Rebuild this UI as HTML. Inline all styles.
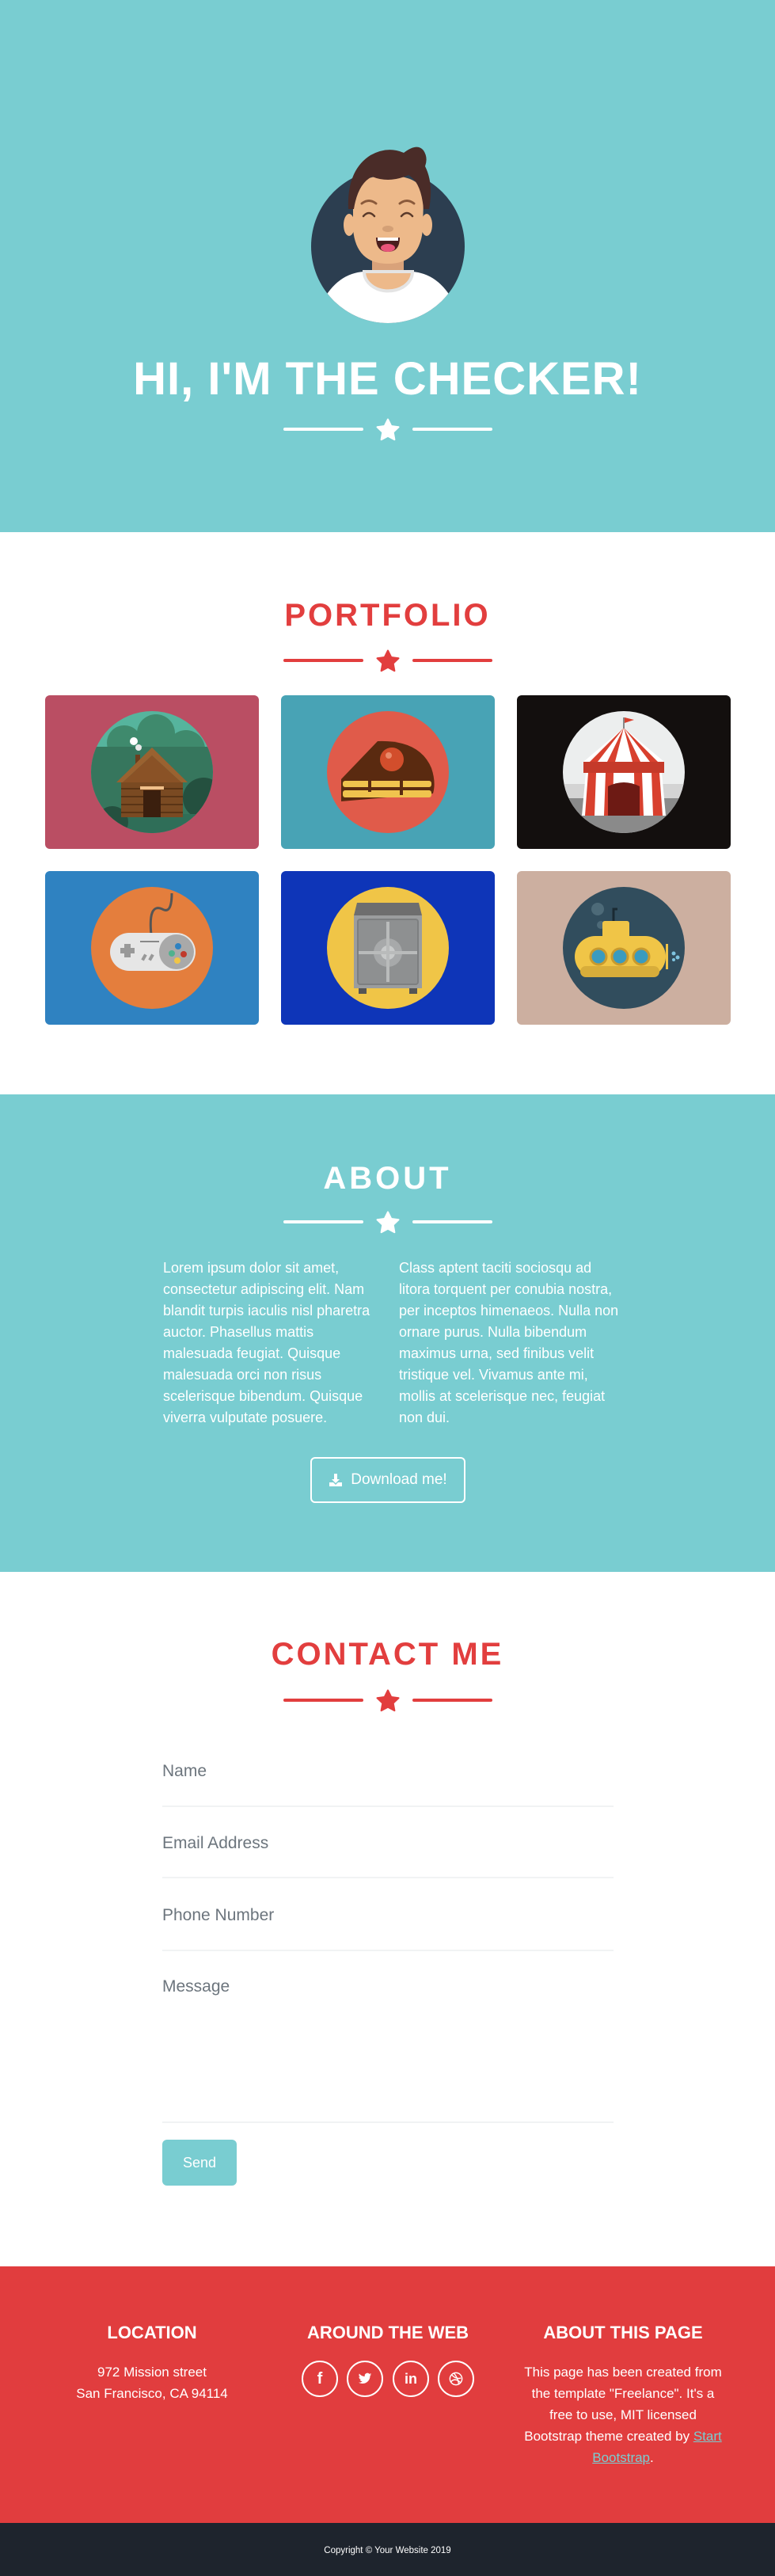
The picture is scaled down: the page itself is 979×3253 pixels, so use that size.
<!DOCTYPE html>
<html><head><meta charset="utf-8">
<style>
*{margin:0;padding:0;box-sizing:border-box}
body{width:979px;height:3253px;position:relative;overflow:hidden;background:#fff;font-family:"Liberation Sans",sans-serif}
.abs{position:absolute}
.sec{position:absolute;left:0;width:979px}
h1,h2{position:absolute;left:0;width:979px;text-align:center;font-weight:bold;line-height:1;white-space:nowrap}
.line{position:absolute;height:4px;border-radius:2px}
.item{position:absolute;width:270px;height:194px;border-radius:6px;overflow:hidden}
.item svg{display:block}
.p{position:absolute;color:#fff;font-size:18px;line-height:27px;white-space:nowrap}
.lbl{position:absolute;left:205px;font-size:21px;color:#6c757d;line-height:1}
.fl{position:absolute;left:205px;width:570px;height:2px;background:#f1f3f4}
.fh{position:absolute;width:300px;text-align:center;color:#fff;font-weight:bold;font-size:22px;line-height:1;white-space:nowrap}
.ft{position:absolute;text-align:center;color:#fff;font-size:17px;line-height:27px;white-space:nowrap}
.soc{position:absolute;top:2981px;width:46px;height:46px;border:2px solid #fff;border-radius:50%;color:#fff;display:flex;align-items:center;justify-content:center;font-weight:bold}
</style></head><body>

<!-- HERO -->
<div class="sec" style="top:0;height:672px;background:#79cdd1"></div>
<svg class="abs" style="left:390px;top:185px" width="200" height="225" viewBox="390 185 200 225">
<defs><clipPath id="cc"><circle cx="490" cy="311" r="97"/></clipPath></defs>
<circle cx="490" cy="311" r="97" fill="#2c3e50"/>
<g clip-path="url(#cc)">
<path d="M405,385 Q425,345 460,343 L520,343 Q555,345 575,385 L575,420 L405,420 Z" fill="#fff"/>
</g>
<rect x="470" y="322" width="40" height="26" fill="#d9a27a"/>
<path d="M460,343 A30,24 0 0 0 521,343 Z" fill="#edb98a" stroke="#e4e4e4" stroke-width="4"/>
<ellipse cx="441" cy="284" rx="7" ry="14" fill="#edb98a"/>
<ellipse cx="539" cy="284" rx="7" ry="14" fill="#edb98a"/>
<path d="M446,250 Q446,222 490,222 Q535,222 535,250 L534,290 Q530,333 490,333 Q450,333 446,290 Z" fill="#edb98a"/>
<path d="M440,264 Q438,215 468,196 Q490,184 510,193 Q527,180 535,190 Q541,199 537,210 Q548,232 542,264 L535,264 Q532,230 516,221 Q492,232 470,223 Q452,232 447,264 Z" fill="#4a2c28"/>
<path d="M457,257 Q466,250 475,257" stroke="#8a5a3b" stroke-width="3" fill="none" stroke-linecap="round"/>
<path d="M505,257 Q514,250 523,257" stroke="#8a5a3b" stroke-width="3" fill="none" stroke-linecap="round"/>
<path d="M459,273 Q466,265 473,273" stroke="#5a3a2a" stroke-width="2.5" fill="none" stroke-linecap="round"/>
<path d="M507,273 Q514,265 521,273" stroke="#5a3a2a" stroke-width="2.5" fill="none" stroke-linecap="round"/>
<ellipse cx="490" cy="289" rx="7" ry="4" fill="#d4a076"/>
<path d="M475,300 L505,300 Q505,318 490,318 Q475,318 475,300 Z" fill="#4a1e1e"/>
<rect x="477" y="300" width="26" height="4" fill="#fff"/>
<ellipse cx="490" cy="313" rx="9" ry="5" fill="#e8557a"/>
</svg>
<h1 style="top:450px;font-size:58px;color:#fff;letter-spacing:1px">HI, I'M THE CHECKER!</h1>
<div class="line" style="left:358px;top:540px;width:101px;background:#fff"></div>
<div class="line" style="left:521px;top:540px;width:101px;background:#fff"></div>
<svg class="abs" style="left:475px;top:528px" width="30" height="30" viewBox="0 0 30 30"><polygon points="15,1.5 19.2,10 28.5,11.3 21.7,17.8 23.4,27.2 15,22.7 6.6,27.2 8.3,17.8 1.5,11.3 10.8,10" fill="#fff" stroke="#fff" stroke-width="2" stroke-linejoin="round"/></svg>

<!-- PORTFOLIO -->
<h2 style="top:757px;font-size:40px;color:#e23e3e;letter-spacing:3px">PORTFOLIO</h2>
<div class="line" style="left:358px;top:832px;width:101px;background:#e23e3e"></div>
<div class="line" style="left:521px;top:832px;width:101px;background:#e23e3e"></div>
<svg class="abs" style="left:475px;top:820px" width="30" height="30" viewBox="0 0 30 30"><polygon points="15,1.5 19.2,10 28.5,11.3 21.7,17.8 23.4,27.2 15,22.7 6.6,27.2 8.3,17.8 1.5,11.3 10.8,10" fill="#e23e3e" stroke="#e23e3e" stroke-width="2" stroke-linejoin="round"/></svg>

<!-- cabin -->
<div class="item" style="left:57px;top:878px;background:#ba4e63">
<svg width="270" height="194" viewBox="0 0 270 194"><defs><clipPath id="c1"><circle cx="135" cy="97" r="77"/></clipPath></defs>
<circle cx="135" cy="97" r="77" fill="#56b49d"/>
<g clip-path="url(#c1)">
<circle cx="100" cy="60" r="22" fill="#3f8a6d"/><circle cx="140" cy="48" r="24" fill="#3f8a6d"/><circle cx="178" cy="68" r="24" fill="#3f8a6d"/>
<rect x="55" y="65" width="160" height="120" fill="#36765d"/>
<circle cx="200" cy="130" r="26" fill="#24503f"/>
<rect x="55" y="150" width="160" height="40" fill="#2f6e58"/>
<circle cx="85" cy="160" r="20" fill="#24503f"/>
</g>
<circle cx="112" cy="58" r="5" fill="#fff"/><circle cx="118" cy="66" r="4" fill="#e8e8e8"/>
<rect x="114" y="75" width="6" height="24" fill="#6b3e1e"/>
<rect x="96" y="108" width="78" height="46" fill="#7a4a22"/>
<g stroke="#5a3415" stroke-width="2"><line x1="96" y1="118" x2="174" y2="118"/><line x1="96" y1="128" x2="174" y2="128"/><line x1="96" y1="138" x2="174" y2="138"/><line x1="96" y1="148" x2="174" y2="148"/></g>
<polygon points="90,110 135,66 180,110 172,110 135,76 98,110" fill="#9a6230"/>
<polygon points="98,110 135,76 172,110" fill="#8a5226"/>
<rect x="124" y="120" width="22" height="34" fill="#3b1f0e"/>
<rect x="120" y="115" width="30" height="4" fill="#f0c08a"/>
</svg></div>

<!-- cake -->
<div class="item" style="left:355px;top:878px;background:#48a3b5">
<svg width="270" height="194" viewBox="0 0 270 194">
<circle cx="135" cy="97" r="77" fill="#e05b4a"/>
<path d="M76,106 L122,58 Q175,56 190,92 Q196,110 192,124 L76,134 Z" fill="#5a2a10"/>
<rect x="78" y="108" width="112" height="8" rx="3" fill="#f0c34e"/>
<rect x="78" y="120" width="112" height="9" rx="3" fill="#f0c34e"/>
<rect x="110" y="106" width="4" height="16" fill="#5a2a10"/><rect x="150" y="106" width="4" height="20" fill="#5a2a10"/>
<circle cx="140" cy="81" r="15" fill="#d24e2c"/><circle cx="136" cy="76" r="4" fill="#e98a6a"/>
</svg></div>

<!-- circus -->
<div class="item" style="left:653px;top:878px;background:#130f0e">
<svg width="270" height="194" viewBox="0 0 270 194"><defs><clipPath id="c3"><circle cx="135" cy="97" r="77"/></clipPath></defs>
<circle cx="135" cy="97" r="77" fill="#eceeee"/>
<g clip-path="url(#c3)"><rect x="50" y="130" width="180" height="60" fill="#8a8a8a"/><rect x="50" y="112" width="180" height="18" fill="#d4d4d4"/></g>
<polygon points="135,41 84,84 186,84" fill="#fff"/>
<g fill="#d8402e"><polygon points="135,41 92,84 102,84"/><polygon points="135,41 114,84 124,84"/><polygon points="135,41 146,84 156,84"/><polygon points="135,41 168,84 178,84"/></g>
<rect x="84" y="84" width="102" height="14" fill="#c53a2a"/>
<polygon points="87,98 183,98 188,152 82,152" fill="#fff"/>
<g fill="#d8402e"><polygon points="90,98 100,98 98,152 86,152"/><polygon points="112,98 122,98 121,152 110,152"/><polygon points="148,98 158,98 160,152 149,152"/><polygon points="170,98 180,98 184,152 172,152"/></g>
<path d="M115,152 L115,115 Q135,105 155,115 L155,152 Z" fill="#6d1a14"/>
<rect x="134" y="28" width="2" height="14" fill="#888"/><polygon points="136,28 148,31 136,35" fill="#d8402e"/>
</svg></div>

<!-- controller -->
<div class="item" style="left:57px;top:1100px;background:#2f82c1">
<svg width="270" height="194" viewBox="0 0 270 194">
<circle cx="135" cy="97" r="77" fill="#e47e3d"/>
<path d="M134,80 Q130,40 148,48 Q160,55 160,28" stroke="#555" stroke-width="3" fill="none"/>
<rect x="82" y="78" width="108" height="48" rx="24" fill="#e6e6e6"/>
<circle cx="166" cy="102" r="22" fill="#a9a9a9"/>
<rect x="95" y="97" width="18" height="7" fill="#999"/><rect x="100" y="92" width="8" height="17" fill="#999"/>
<circle cx="160" cy="104" r="4" fill="#4fb28e"/><circle cx="168" cy="95" r="4" fill="#2f82c1"/><circle cx="175" cy="105" r="4" fill="#c0392b"/><circle cx="167" cy="113" r="4" fill="#f0c547"/>
<rect x="123" y="105" width="4" height="8" fill="#999" transform="rotate(30 125 109)"/><rect x="132" y="105" width="4" height="8" fill="#999" transform="rotate(30 134 109)"/>
<rect x="120" y="88" width="24" height="2" fill="#888"/>
</svg></div>

<!-- safe -->
<div class="item" style="left:355px;top:1100px;background:#0e35b8">
<svg width="270" height="194" viewBox="0 0 270 194">
<circle cx="135" cy="97" r="77" fill="#f0c547"/>
<path d="M96,40 L174,40 L178,56 L92,56 Z" fill="#6e6e6e"/>
<rect x="92" y="56" width="86" height="92" fill="#9b9d9e"/>
<rect x="97" y="61" width="76" height="82" rx="3" fill="#8e9091" stroke="#7d7f80" stroke-width="2"/>
<circle cx="135" cy="103" r="18" fill="#a7a9aa"/><circle cx="135" cy="103" r="9" fill="#c8caca"/>
<rect x="98" y="101" width="74" height="4" fill="#b9bbbb"/><rect x="133" y="64" width="4" height="76" fill="#b9bbbb"/>
<rect x="98" y="148" width="10" height="7" fill="#555"/><rect x="162" y="148" width="10" height="7" fill="#555"/>
</svg></div>

<!-- submarine -->
<div class="item" style="left:653px;top:1100px;background:#ccafa0">
<svg width="270" height="194" viewBox="0 0 270 194">
<circle cx="135" cy="97" r="77" fill="#314d5d"/>
<circle cx="102" cy="48" r="8" fill="#4d6a78"/><circle cx="106" cy="68" r="5" fill="#4d6a78"/>
<path d="M122,64 L122,48 L127,48" stroke="#1a2a33" stroke-width="3" fill="none"/>
<rect x="108" y="63" width="34" height="24" rx="3" fill="#f0c547"/>
<rect x="73" y="82" width="115" height="52" rx="26" fill="#f0c547"/>
<rect x="80" y="120" width="100" height="14" rx="7" fill="#d8ad3a"/>
<circle cx="103" cy="108" r="10" fill="#3a9bbf" stroke="#c89a2e" stroke-width="3"/><circle cx="130" cy="108" r="10" fill="#3a9bbf" stroke="#c89a2e" stroke-width="3"/><circle cx="157" cy="108" r="10" fill="#3a9bbf" stroke="#c89a2e" stroke-width="3"/>
<rect x="188" y="92" width="3" height="32" fill="#f0c547"/>
<circle cx="198" cy="104" r="2.5" fill="#7fc4e0"/><circle cx="203" cy="109" r="2.5" fill="#7fc4e0"/><circle cx="198" cy="112" r="2" fill="#7fc4e0"/>
</svg></div>

<!-- ABOUT -->
<div class="sec" style="top:1382px;height:603px;background:#79cdd1"></div>
<h2 style="top:1468px;font-size:40px;color:#fff;letter-spacing:4px">ABOUT</h2>
<div class="line" style="left:358px;top:1541px;width:101px;background:#fff"></div>
<div class="line" style="left:521px;top:1541px;width:101px;background:#fff"></div>
<svg class="abs" style="left:475px;top:1529px" width="30" height="30" viewBox="0 0 30 30"><polygon points="15,1.5 19.2,10 28.5,11.3 21.7,17.8 23.4,27.2 15,22.7 6.6,27.2 8.3,17.8 1.5,11.3 10.8,10" fill="#fff" stroke="#fff" stroke-width="2" stroke-linejoin="round"/></svg>
<div class="p" style="left:206px;top:1588px">Lorem ipsum dolor sit amet,<br>consectetur adipiscing elit. Nam<br>blandit turpis iaculis nisl pharetra<br>auctor. Phasellus mattis<br>malesuada feugiat. Quisque<br>malesuada orci non risus<br>scelerisque bibendum. Quisque<br>viverra vulputate posuere.</div>
<div class="p" style="left:504px;top:1588px">Class aptent taciti sociosqu ad<br>litora torquent per conubia nostra,<br>per inceptos himenaeos. Nulla non<br>ornare purus. Nulla bibendum<br>maximus urna, sed finibus velit<br>tristique vel. Vivamus ante mi,<br>mollis at scelerisque nec, feugiat<br>non dui.</div>
<div class="abs" style="left:392px;top:1840px;width:196px;height:58px;border:2px solid #fff;border-radius:6px;color:#fff;font-size:19px;display:flex;align-items:center;justify-content:center;gap:10px">
<svg width="18" height="18" viewBox="0 0 18 18"><path d="M7 1h4v7h3l-5 5-5-5h3z" fill="#fff"/><path d="M1 12h5l3 3 3-3h5v5H1z" fill="#fff"/></svg>Download me!</div>

<!-- CONTACT -->
<h2 style="top:2069px;font-size:40px;color:#e23e3e;letter-spacing:3px">CONTACT ME</h2>
<div class="line" style="left:358px;top:2145px;width:101px;background:#e23e3e"></div>
<div class="line" style="left:521px;top:2145px;width:101px;background:#e23e3e"></div>
<svg class="abs" style="left:475px;top:2133px" width="30" height="30" viewBox="0 0 30 30"><polygon points="15,1.5 19.2,10 28.5,11.3 21.7,17.8 23.4,27.2 15,22.7 6.6,27.2 8.3,17.8 1.5,11.3 10.8,10" fill="#e23e3e" stroke="#e23e3e" stroke-width="2" stroke-linejoin="round"/></svg>
<div class="lbl" style="top:2226px">Name</div>
<div class="fl" style="top:2280px"></div>
<div class="lbl" style="top:2317px">Email Address</div>
<div class="fl" style="top:2370px"></div>
<div class="lbl" style="top:2408px">Phone Number</div>
<div class="fl" style="top:2462px"></div>
<div class="lbl" style="top:2498px">Message</div>
<div class="fl" style="top:2679px"></div>
<div class="abs" style="left:205px;top:2702px;width:94px;height:58px;background:#79cdd1;border-radius:6px;color:#fff;font-size:18px;display:flex;align-items:center;justify-content:center">Send</div>

<!-- FOOTER -->
<div class="sec" style="top:2862px;height:324px;background:#e13d3e"></div>
<div class="fh" style="left:42px;top:2935px">LOCATION</div>
<div class="fh" style="left:340px;top:2935px">AROUND THE WEB</div>
<div class="fh" style="left:637px;top:2935px">ABOUT THIS PAGE</div>
<div class="ft" style="left:42px;width:300px;top:2982px">972 Mission street<br>San Francisco, CA 94114</div>
<div class="soc" style="left:381px;font-size:20px">f</div>
<div class="soc" style="left:438px"><svg width="18" height="18" viewBox="0 0 24 24"><path d="M23 4.5c-.8.4-1.7.6-2.6.7.9-.6 1.6-1.4 2-2.5-.9.5-1.9.9-2.9 1.1A4.5 4.5 0 0 0 11.8 8 12.8 12.8 0 0 1 2.5 3.3a4.5 4.5 0 0 0 1.4 6 4.4 4.4 0 0 1-2-.6 4.5 4.5 0 0 0 3.6 4.4 4.5 4.5 0 0 1-2 .1 4.5 4.5 0 0 0 4.2 3.1A9 9 0 0 1 1 18.2 12.8 12.8 0 0 0 7.9 20c8.3 0 12.8-6.9 12.8-12.8v-.6c.9-.6 1.6-1.4 2.3-2.1z" fill="#fff"/></svg></div>
<div class="soc" style="left:496px;font-size:18px">in</div>
<div class="soc" style="left:553px"><svg width="18" height="18" viewBox="0 0 20 20" fill="none" stroke="#fff" stroke-width="1.6"><circle cx="10" cy="10" r="8.5"/><path d="M4 4.5Q10 11 17 9"/><path d="M7 2Q13 9 14 18"/><path d="M3 14Q9 8 16 15"/></svg></div>
<div class="ft" style="left:637px;width:300px;top:2982px">This page has been created from<br>the template "Freelance". It's a<br>free to use, MIT licensed<br>Bootstrap theme created by <span style="color:#79cdd1;text-decoration:underline">Start</span><br><span style="color:#79cdd1;text-decoration:underline">Bootstrap</span>.</div>
<div class="sec" style="top:3186px;height:67px;background:#1e242d"></div>
<div class="abs" style="left:0;width:979px;top:3214px;text-align:center;color:#fff;font-size:11.5px;line-height:14px">Copyright © Your Website 2019</div>
</body></html>
